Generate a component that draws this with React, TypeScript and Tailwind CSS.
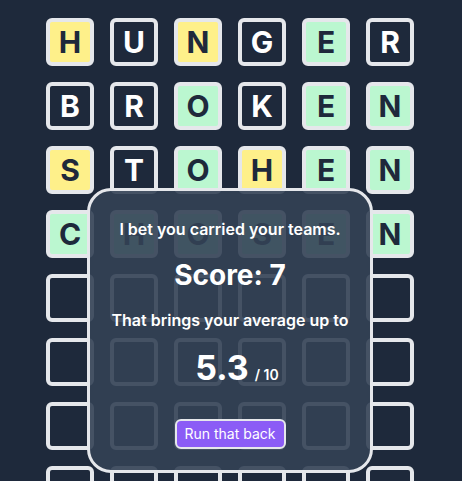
const rows: { letter: string; state: "hit" | "near" | "miss" }[][] = [
  [
    { letter: "H", state: "near" },
    { letter: "U", state: "miss" },
    { letter: "N", state: "near" },
    { letter: "G", state: "miss" },
    { letter: "E", state: "hit" },
    { letter: "R", state: "miss" },
  ],
  [
    { letter: "B", state: "miss" },
    { letter: "R", state: "miss" },
    { letter: "O", state: "hit" },
    { letter: "K", state: "miss" },
    { letter: "E", state: "hit" },
    { letter: "N", state: "hit" },
  ],
  [
    { letter: "S", state: "near" },
    { letter: "T", state: "miss" },
    { letter: "O", state: "hit" },
    { letter: "H", state: "near" },
    { letter: "E", state: "hit" },
    { letter: "N", state: "hit" },
  ],
  [
    { letter: "C", state: "hit" },
    { letter: "H", state: "hit" },
    { letter: "O", state: "hit" },
    { letter: "S", state: "hit" },
    { letter: "E", state: "hit" },
    { letter: "N", state: "hit" },
  ],
];

const EMPTY_ROWS = 4;

function Tile({ letter, state }: { letter?: string; state?: "hit" | "near" | "miss" }) {
  const bg =
    state === "hit"
      ? "bg-[#bbf7d0] text-[#1e293b]"
      : state === "near"
        ? "bg-[#fef08a] text-[#1e293b]"
        : "bg-[#1e293b] text-white";
  return (
    <div
      className={`flex h-12 w-12 items-center justify-center rounded-md border-4 border-[#e5e7eb] text-3xl font-bold ${bg}`}
    >
      {letter}
    </div>
  );
}

export default function App() {
  return (
    <div className="relative h-[481px] w-full overflow-hidden bg-[#1e293b] font-['Inter',sans-serif]">
      {/* Board */}
      <div className="flex flex-col gap-4 pl-[46px] pt-[18px]">
        {rows.map((row, i) => (
          <div key={i} className="flex gap-4">
            {row.map((t, j) => (
              <Tile key={j} letter={t.letter} state={t.state} />
            ))}
          </div>
        ))}
        {Array.from({ length: EMPTY_ROWS }).map((_, i) => (
          <div key={`e${i}`} className="flex gap-4">
            {Array.from({ length: 6 }).map((_, j) => (
              <Tile key={j} />
            ))}
          </div>
        ))}
      </div>

      {/* Result modal */}
      <div className="absolute left-[87px] top-[188px] flex h-[285px] w-[286px] flex-col items-center rounded-3xl border-[3px] border-[#e5e7eb] bg-[#334155]/90 pt-[26px] text-white">
        <p className="text-base font-semibold leading-6">I bet you carried your teams.</p>
        <p className="mt-4 text-[28px] font-bold leading-9">Score: 7</p>
        <p className="mt-[15px] text-base font-semibold leading-6">That brings your average up to</p>
        <p className="mt-4 pl-[14px] leading-10">
          <span className="text-[34px] font-bold">5.3</span>
          <span className="ml-1.5 text-sm font-semibold">/ 10</span>
        </p>
        <button className="mt-[25px] h-[30px] w-[111px] rounded-md border-2 border-[#e5e7eb] bg-[#8b5cf6] text-sm text-white">
          Run that back
        </button>
      </div>
    </div>
  );
}
